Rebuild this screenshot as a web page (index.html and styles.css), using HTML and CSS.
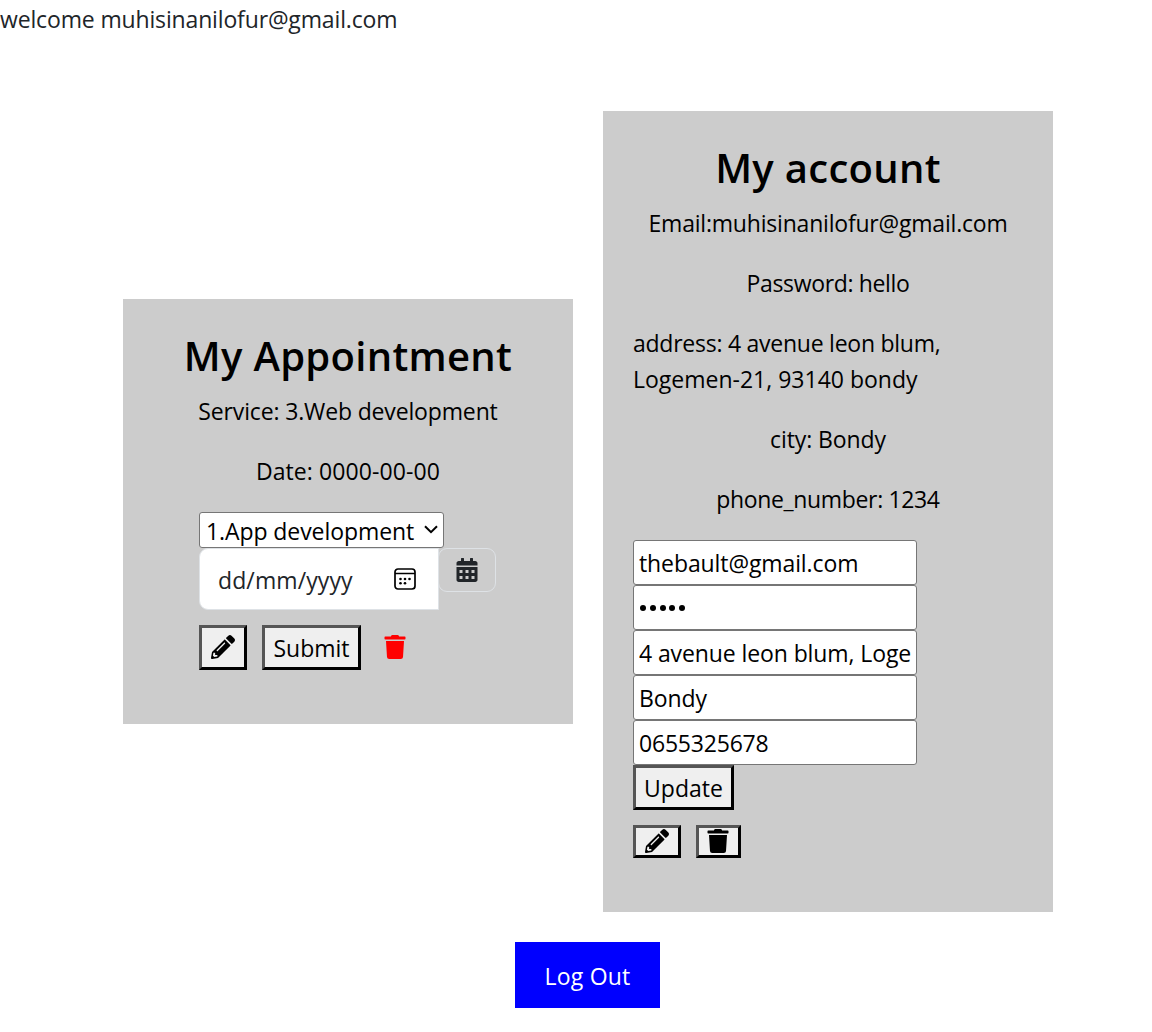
FILE: index.html
```html
<!DOCTYPE html>
<html lang="en">
<head>
<meta charset="utf-8">
<title>My account</title>
<link rel="stylesheet" href="styles.css">
</head>
<body>
<svg width="0" height="0" class="sprite" aria-hidden="true">
  <symbol id="pencil" viewBox="0 0 512 512"><path d="M497.900 142.100l-46.100 46.100c-4.700 4.700-12.300 4.700-17 0l-111-111c-4.700-4.700-4.700-12.300 0-17l46.100-46.100c18.700-18.700 49.100-18.700 67.900 0l60.100 60.100c18.800 18.700 18.800 49.100 0 67.900zM284.200 99.800L21.600 362.400.4 483.900c-2.900 16.400 11.400 30.600 27.800 27.800l121.500-21.300 262.600-262.600c4.700-4.700 4.700-12.300 0-17l-111-111c-4.800-4.700-12.400-4.700-17.100 0zM124.100 339.900c-5.500-5.500-5.500-14.300 0-19.800l154-154c5.500-5.500 14.300-5.500 19.800 0s5.500 14.300 0 19.800l-154 154c-5.500 5.500-14.300 5.500-19.800 0zM88 424h48v36.300l-64.500 11.300-31.100-31.100L51.700 376H88v48z"/></symbol>
  <symbol id="trash" viewBox="0 0 448 512"><path d="M432 32H312l-9.400-18.700A24 24 0 0 0 281.100 0H166.800a23.720 23.720 0 0 0-21.400 13.300L136 32H16A16 16 0 0 0 0 48v32a16 16 0 0 0 16 16h416a16 16 0 0 0 16-16V48a16 16 0 0 0-16-16zM53.200 467a48 48 0 0 0 47.900 45h245.800a48 48 0 0 0 47.900-45L416 128H32z"/></symbol>
  <symbol id="calendar" viewBox="0 0 448 512"><path fill-rule="evenodd" d="M400 64H352V12c0-6.600-5.400-12-12-12H300c-6.600 0-12 5.400-12 12V64H160V12c0-6.600-5.400-12-12-12H108c-6.600 0-12 5.400-12 12V64H48C21.500 64 0 85.500 0 112v48H448V112c0-26.500-21.500-48-48-48zM0 192H448V464c0 26.500-21.500 48-48 48H48c-26.500 0-48-21.500-48-48zM64 256h64v64H64zM192 256h64v64H192zM320 256h64v64H320zM64 384h64v64H64zM192 384h64v64H192zM320 384h64v64H320z"/></symbol>
</svg>
<p class="welcome">welcome muhisinanilofur@gmail.com</p>
<main class="cards">
  <section class="card appointment">
    <h3 class="title">My Appointment</h3>
    <p class="service">Service: 3.Web development</p>
    <p class="date">Date: 0000-00-00</p>
    <form class="appointment-form">
      <button type="button" class="select"><span>1.App development</span>
        <svg width="14" height="9" viewBox="0 0 14 9"><path d="M1 1.200 7 7.200 13 1.200" fill="none" stroke="#000" stroke-width="2"/></svg>
      </button>
      <div class="date-group">
        <div class="date-input"><span>dd/mm/yyyy</span>
          <svg width="22" height="22" viewBox="0 0 22 22"><rect x="1" y="1" width="20" height="20" rx="3" fill="none" stroke="#000" stroke-width="1.700"/><path d="M1 5.500H21" stroke="#000" stroke-width="1.500"/><g fill="#000"><circle cx="11" cy="11" r="1.300"/><circle cx="15.500" cy="11" r="1.300"/><circle cx="6.500" cy="11" r="1.300"/><circle cx="6.500" cy="15.200" r="1.300"/><circle cx="11" cy="15.200" r="1.300"/></g></svg>
        </div>
        <span class="addon"><svg width="22" height="24"><use href="#calendar"/></svg></span>
      </div>
      <div class="actions">
        <button type="button" class="btn btn-edit"><svg width="24" height="24"><use href="#pencil"/></svg></button>
        <button type="button" class="btn btn-submit">Submit</button>
        <svg class="remove" width="22" height="24"><use href="#trash"/></svg>
      </div>
    </form>
  </section>
  <section class="card account">
    <h3 class="title">My account</h3>
    <p class="email">Email:muhisinanilofur@gmail.com</p>
    <p class="password">Password: hello</p>
    <p class="address"><span class="address-street">address: 4 avenue leon blum,</span><br>Logemen-21, 93140 bondy</p>
    <p class="city">city: Bondy</p>
    <p class="phone">phone_number: 1234</p>
    <form class="account-form">
      <input class="field field-email" value="thebault@gmail.com">
      <div class="field field-password"><i></i><i></i><i></i><i></i><i></i></div>
      <input class="field field-address" value="4 avenue leon blum, Loge">
      <input class="field field-city" value="Bondy">
      <input class="field field-phone" value="0655325678">
      <button type="button" class="btn btn-update">Update</button>
    </form>
    <div class="actions compact">
      <button type="button" class="btn btn-edit"><svg width="24" height="24"><use href="#pencil"/></svg></button>
      <button type="button" class="btn btn-delete"><svg width="22" height="24"><use href="#trash"/></svg></button>
    </div>
  </section>
</main>
<a class="logout">Log Out</a>
</body>
</html>
```
FILE: styles.css
```css
* { box-sizing: border-box; }
body {
  margin: 0;
  padding-top: 1px;
  height: 1032px;
  overflow: hidden;
  background: #fff;
  color: #212529;
  font: 23px/36px "Open Sans", "Noto Sans", sans-serif;
  font-kerning: none;
}
p, h3 { margin: 0 0 24px; white-space: nowrap; }
svg { display: block; flex: none; fill: currentColor; }
.sprite { position: absolute; }
.welcome { margin-bottom: 74px; letter-spacing: -0.15px; }
.cards { display: flex; align-items: center; gap: 30px; margin-left: 123px; color: #000; }
.card {
  width: 450px;
  padding: 32px 30px 54px;
  background: #ccc;
  display: flex;
  flex-direction: column;
  align-items: center;
}
.appointment { height: 425px; }
.account { height: 801px; }
.title { margin-bottom: 12px; font-size: 40px; font-weight: 600; line-height: 50px; letter-spacing: 0.3px; }
.date, .phone { margin-bottom: 23px; }
.service { letter-spacing: -0.15px; }
.date { letter-spacing: 0.1px; }
.email { letter-spacing: -0.2px; }
.password, .phone { letter-spacing: -0.35px; }
.city { letter-spacing: -0.1px; }
.address-street { letter-spacing: -0.25px; }
.appointment-form { width: 298px; }
.select {
  display: flex;
  align-items: center;
  justify-content: space-between;
  width: 245px;
  height: 36px;
  padding: 1px 5px 0 6px;
  border: 1px solid #767676;
  border-radius: 3px;
  background: #fff;
  color: #000;
  font: inherit;
  letter-spacing: -0.08px;
  white-space: nowrap;
}
.select svg { margin-top: -2px; }
.date-group { display: flex; align-items: flex-start; }
.date-input {
  display: flex;
  align-items: center;
  justify-content: space-between;
  width: 240px;
  height: 62px;
  padding: 2px 22px 0 18px;
  border: 1px solid #dee2e6;
  border-radius: 9px 0 0 9px;
  background: #fff;
  color: #212529;
  letter-spacing: 0.1px;
}
.date-input svg { margin-top: -3px; }
.addon {
  display: flex;
  align-items: center;
  justify-content: center;
  width: 58px;
  height: 44px;
  margin-left: -1px;
  border: 1px solid #dee2e6;
  border-radius: 9px;
  color: #212529;
}
.actions { display: flex; gap: 15px; margin-top: 15px; align-items: center; }
.btn {
  display: flex;
  align-items: center;
  justify-content: center;
  height: 45px;
  padding: 0;
  border: 3px outset #000;
  border-color: #555 #000 #000 #555;
  background: #efefef;
  color: #000;
  font: inherit;
  white-space: nowrap;
}
.btn-edit { width: 48px; }
.btn svg { margin: -2px 0 0 -1px; }
.btn-submit { width: 99px; padding-top: 1px; }
.btn-update { width: 101px; padding-top: 1px; }
.btn-delete { width: 45px; }
.compact { align-self: flex-start; }
.compact .btn { height: 33px; }
.remove { margin: -2px 0 0 8px; color: #f00; }
.address, .account-form { align-self: flex-start; }
.field {
  display: block;
  width: 284px;
  height: 45px;
  padding: 1px 4px 0 5px;
  border: 1px solid #767676;
  border-radius: 3px;
  background: #fff;
  color: #000;
  font: inherit;
  letter-spacing: -0.1px;
}
.field-phone { letter-spacing: -0.2px; }
.field-password { display: flex; align-items: center; gap: 3.8px; padding-left: 6px; }
.field-password i { width: 6px; height: 6px; border-radius: 50%; background: #000; }
.logout {
  display: block;
  width: 145px;
  height: 66px;
  margin: 30px 0 0 515px;
  padding-top: 16px;
  background: #00f;
  color: #fff;
  text-align: center;
  letter-spacing: 0.2px;
}
```
